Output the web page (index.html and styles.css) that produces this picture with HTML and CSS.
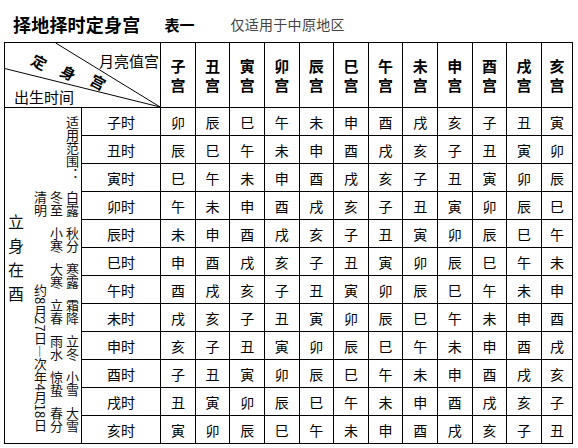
FILE: index.html
```html
<!DOCTYPE html>
<html lang="zh">
<head>
<meta charset="utf-8">
<link rel="stylesheet" href="styles.css">
</head>
<body>
<div class="title">
  <h1>择地择时定身宫</h1>
  <span class="sub">表一</span>
  <span class="note">仅适用于中原地区</span>
</div>
<table class="grid">
  <colgroup>
    <col class="c-scope"><col class="c-time">
    <col class="c-g"><col class="c-g"><col class="c-g"><col class="c-g"><col class="c-g"><col class="c-g">
    <col class="c-g"><col class="c-g"><col class="c-g"><col class="c-g"><col class="c-g"><col class="c-last">
  </colgroup>
  <thead>
    <tr class="head">
      <th colspan="2" class="diag">
        <svg class="diag-lines" viewBox="0 0 156 65" preserveAspectRatio="none">
          <line x1="51" y1="0" x2="156" y2="65"/>
          <line x1="0" y1="26" x2="156" y2="65"/>
        </svg>
        <span class="moon">月亮值宫</span>
        <span class="dsg d1">定</span>
        <span class="dsg d2">身</span>
        <span class="dsg d3">宫</span>
        <span class="born">出生时间</span>
      </th>
      <th>子<br>宫</th><th>丑<br>宫</th><th>寅<br>宫</th><th>卯<br>宫</th><th>辰<br>宫</th><th>巳<br>宫</th>
      <th>午<br>宫</th><th>未<br>宫</th><th>申<br>宫</th><th>酉<br>宫</th><th>戌<br>宫</th><th>亥<br>宫</th>
    </tr>
  </thead>
  <tbody>
    <tr>
      <td class="scope" rowspan="12">
        <div class="scope-in">
          <div class="lishen"><span>立</span><span>身</span><span>在</span><span>酉</span></div>
          <div class="vcol colb">
            <span class="v">清明</span>
            <span class="v date">约8月27日—次年4月18日</span>
          </div>
          <div class="vcol colc">
            <span class="v">冬至</span><span class="v">小寒</span><span class="v">大寒</span><span class="v">立春</span>
            <span class="v">雨水</span><span class="v">惊蛰</span><span class="v">春分</span>
          </div>
          <div class="vcol cold">
            <span class="v">适用范围：</span>
            <span class="v">白露</span><span class="v">秋分</span><span class="v">寒露</span><span class="v">霜降</span>
            <span class="v">立冬</span><span class="v">小雪</span><span class="v">大雪</span>
          </div>
        </div>
      </td>
      <td class="time">子时</td><td>卯</td><td>辰</td><td>巳</td><td>午</td><td>未</td><td>申</td><td>酉</td><td>戌</td><td>亥</td><td>子</td><td>丑</td><td>寅</td>
    </tr>
    <tr><td class="time">丑时</td><td>辰</td><td>巳</td><td>午</td><td>未</td><td>申</td><td>酉</td><td>戌</td><td>亥</td><td>子</td><td>丑</td><td>寅</td><td>卯</td></tr>
    <tr><td class="time">寅时</td><td>巳</td><td>午</td><td>未</td><td>申</td><td>酉</td><td>戌</td><td>亥</td><td>子</td><td>丑</td><td>寅</td><td>卯</td><td>辰</td></tr>
    <tr><td class="time">卯时</td><td>午</td><td>未</td><td>申</td><td>酉</td><td>戌</td><td>亥</td><td>子</td><td>丑</td><td>寅</td><td>卯</td><td>辰</td><td>巳</td></tr>
    <tr><td class="time">辰时</td><td>未</td><td>申</td><td>酉</td><td>戌</td><td>亥</td><td>子</td><td>丑</td><td>寅</td><td>卯</td><td>辰</td><td>巳</td><td>午</td></tr>
    <tr><td class="time">巳时</td><td>申</td><td>酉</td><td>戌</td><td>亥</td><td>子</td><td>丑</td><td>寅</td><td>卯</td><td>辰</td><td>巳</td><td>午</td><td>未</td></tr>
    <tr><td class="time">午时</td><td>酉</td><td>戌</td><td>亥</td><td>子</td><td>丑</td><td>寅</td><td>卯</td><td>辰</td><td>巳</td><td>午</td><td>未</td><td>申</td></tr>
    <tr><td class="time">未时</td><td>戌</td><td>亥</td><td>子</td><td>丑</td><td>寅</td><td>卯</td><td>辰</td><td>巳</td><td>午</td><td>未</td><td>申</td><td>酉</td></tr>
    <tr><td class="time">申时</td><td>亥</td><td>子</td><td>丑</td><td>寅</td><td>卯</td><td>辰</td><td>巳</td><td>午</td><td>未</td><td>申</td><td>酉</td><td>戌</td></tr>
    <tr><td class="time">酉时</td><td>子</td><td>丑</td><td>寅</td><td>卯</td><td>辰</td><td>巳</td><td>午</td><td>未</td><td>申</td><td>酉</td><td>戌</td><td>亥</td></tr>
    <tr><td class="time">戌时</td><td>丑</td><td>寅</td><td>卯</td><td>辰</td><td>巳</td><td>午</td><td>未</td><td>申</td><td>酉</td><td>戌</td><td>亥</td><td>子</td></tr>
    <tr><td class="time">亥时</td><td>寅</td><td>卯</td><td>辰</td><td>巳</td><td>午</td><td>未</td><td>申</td><td>酉</td><td>戌</td><td>亥</td><td>子</td><td>丑</td></tr>
  </tbody>
</table>
</body>
</html>
```
FILE: styles.css
```css
html, body {
  margin: 0;
  padding: 0;
  background: #fff;
}
body {
  font-family: "Noto Sans CJK SC", "Noto Sans", sans-serif;
  color: #000;
}
.title {
  display: flex;
  align-items: center;
  height: 36px;
  padding: 6px 0 0 13px;
}
.title h1 {
  margin: 0;
  font-size: 18px;
  font-weight: 700;
  line-height: 1;
  letter-spacing: 0.2px;
}
.sub {
  margin-left: 24px;
  font-size: 15px;
  font-weight: 700;
  line-height: 1;
}
.note {
  margin-left: 36px;
  font-size: 14px;
  color: #444;
  line-height: 1;
  letter-spacing: 0.3px;
}
.grid {
  margin-left: 4px;
  border-collapse: collapse;
  table-layout: fixed;
  width: 569px;
}
.c-scope { width: 77px; }
.c-time { width: 79px; }
.c-g { width: 34.6px; }
.c-last { width: 31px; }
.grid th, .grid td {
  border: 1px solid #000;
  padding: 0;
  text-align: center;
}
.head th {
  height: 64px;
  font-size: 15px;
  font-weight: 600;
  line-height: 19px;
}
.grid tbody td {
  height: 27px;
  font-size: 14px;
  line-height: 14px;
}
.grid tbody td.time {
  font-size: 14px;
}
.diag {
  position: relative;
}
.diag-lines {
  position: absolute;
  left: 0;
  top: 0;
  width: 100%;
  height: 100%;
}
.diag-lines line {
  stroke: #000;
  stroke-width: 1;
}
.moon, .born, .dsg {
  position: absolute;
  font-weight: 400;
  font-size: 15px;
  line-height: 15px;
  white-space: nowrap;
}
.moon { right: 1px; top: 10px; }
.born { left: 9px; bottom: 3px; }
.dsg {
  font-weight: 700;
  font-size: 15px;
  line-height: 15px;
  width: 15px;
  transform: rotate(28deg);
}
.d1 { left: 27px; top: 11px; }
.d2 { left: 56px; top: 22px; }
.d3 { left: 86px; top: 31px; }

.grid tbody td.scope {
  vertical-align: top;
  height: auto;
}
.scope-in {
  display: flex;
  height: 330px;
  overflow: hidden;
  color: #111;
}
.lishen {
  display: flex;
  flex-direction: column;
  margin-left: 3px;
  padding-top: 101px;
  width: 16px;
  font-size: 16px;
  line-height: 24px;
}
.vcol {
  display: flex;
  flex-direction: column;
  align-items: center;
  width: 14px;
  font-size: 13px;
}
.v {
  writing-mode: vertical-rl;
  line-height: 14px;
}
.colb { margin-left: 9px; padding-top: 83px; }
.colb .date { margin-top: 67px; }
.colc { margin-left: 2px; padding-top: 83px; gap: 10px; }
.cold { margin-left: 2px; padding-top: 8px; gap: 10px; }
```
